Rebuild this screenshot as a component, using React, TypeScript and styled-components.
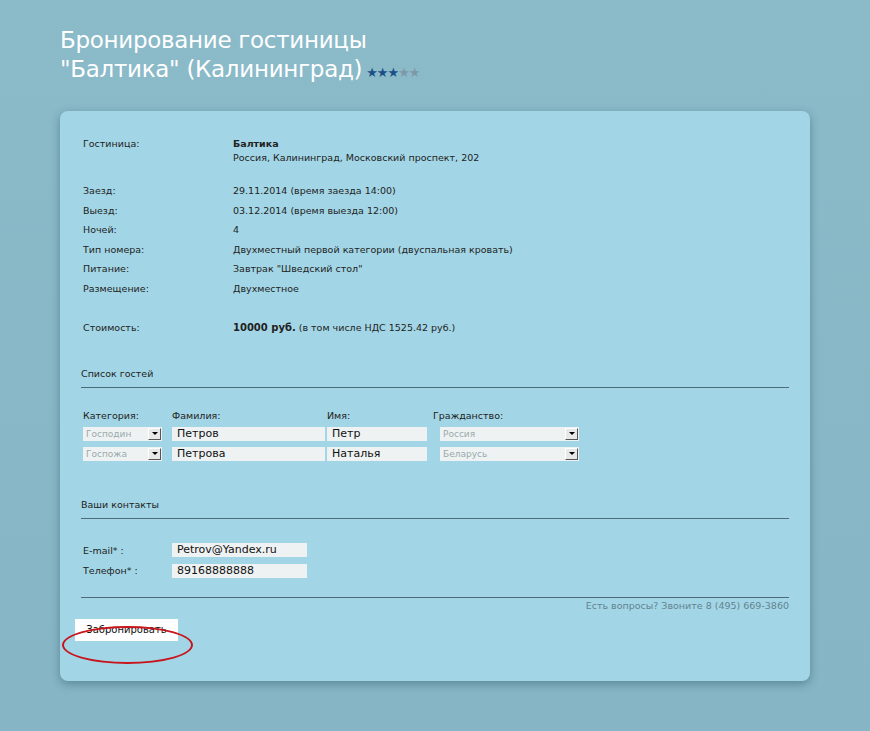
import React from "react";
import styled, { createGlobalStyle } from "styled-components";

const G = createGlobalStyle`
  html,body{margin:0;padding:0;background:#8ab9c9;}
  body{font-family:"DejaVu Sans",Tahoma,sans-serif;}
`;
const Page = styled.div`
  width:870px;height:731px;box-sizing:border-box;background:linear-gradient(#8bbac9,#86b5c5);
  padding:26px 0 0 60px;
`;
const Title = styled.h1`
  margin:0;font-family:"DejaVu Sans",sans-serif;font-weight:normal;color:#fff;font-size:23px;line-height:29px;letter-spacing:-0.3px;
`;
const Stars = styled.span`font-size:13px;letter-spacing:-1px;margin-left:4px;`;
const Star = styled.span<{ $on: boolean }>`color:${p => (p.$on ? "#1d4f86" : "#7d98a6")};`;
const Card = styled.div`
  position:relative;margin-top:24px;width:750px;height:570px;box-sizing:border-box;background:#a2d6e6;border-radius:8px;
  box-shadow:0 3px 10px rgba(40,80,95,.45);padding:23px 21px 0 21px;font-size:9.5px;color:#222;
`;
const Info = styled.div`
  display:grid;grid-template-columns:150px 1fr;padding-left:2px;row-gap:0;
`;
const L = styled.div<{ $mt?: number }>`margin-top:${p => p.$mt ?? 0}px;line-height:19.5px;`;
const V = styled.div<{ $mt?: number }>`margin-top:${p => p.$mt ?? 0}px;line-height:19.5px;`;
const Section = styled.div<{ $mt: number }>`
  margin-top:${p => p.$mt}px;padding-bottom:8px;border-bottom:1.5px solid #4d6c79;font-size:9.5px;
`;
const Guests = styled.div`
  margin-top:22px;padding-left:2px;display:grid;grid-template-columns:89px 155px 102px 140px;row-gap:6px;align-items:center;
`;
const H = styled.div`font-size:9.5px;color:#222;`;
const Sel = styled.div<{ $w: number; $ml?: number }>`
  width:${p => p.$w}px;margin-left:${p => p.$ml ?? 0}px;height:14px;box-sizing:border-box;background:#eef2f3;color:#9aa;display:flex;align-items:center;justify-content:space-between;padding-left:3px;font-size:9px;
`;
const Arrow = styled.span`
  width:13px;height:12px;margin-right:1px;background:#e8e8e8;border:1px solid #777;border-color:#fff #555 #555 #fff;box-sizing:border-box;display:flex;align-items:center;justify-content:center;
  &::after{content:"";border:3px solid transparent;border-top:3px solid #000;margin-top:3px;}
`;
const Inp = styled.div<{ $w: number }>`
  width:${p => p.$w}px;height:14px;background:#eef2f3;color:#111;font-size:11px;line-height:14px;padding-left:5px;box-sizing:border-box;
`;
const Contacts = styled.div`
  margin-top:22px;padding-left:2px;display:grid;grid-template-columns:89px auto;row-gap:1px;align-items:center;justify-content:start;
`;
const Footer = styled.div`
  margin-top:16px;border-top:1.5px solid #4d6c79;text-align:right;padding-top:2px;color:#64838f;font-size:9.5px;
`;
const Btn = styled.div`
  margin:8px 0 0 -6px;width:103px;height:22px;background:#fff;display:flex;align-items:center;justify-content:center;font-size:10px;color:#111;
`;
const Ellipse = styled.div`
  position:absolute;left:2px;top:515px;width:131px;height:38px;border:2.5px solid #c8141c;border-radius:50%;box-sizing:border-box;
`;

export default function App() {
  return (
    <Page>
      <G />
      <Title>Бронирование гостиницы<br />"Балтика" (Калининград)<Stars>{[1,2,3,4,5].map(i => <Star key={i} $on={i <= 3}>★</Star>)}</Stars></Title>
      <Card>
        <Info>
          <L>Гостиница:</L>
          <V><b>Балтика</b><br /><span style={{ position: "relative", top: -6 }}>Россия, Калининград, Московский проспект, 202</span></V>
          <L $mt={8}>Заезд:</L><V $mt={8}>29.11.2014 (время заезда 14:00)</V>
          <L>Выезд:</L><V>03.12.2014 (время выезда 12:00)</V>
          <L>Ночей:</L><V>4</V>
          <L>Тип номера:</L><V>Двухместный первой категории (двуспальная кровать)</V>
          <L>Питание:</L><V>Завтрак "Шведский стол"</V>
          <L>Размещение:</L><V>Двухместное</V>
          <L $mt={20}>Стоимость:</L><V $mt={20}><b style={{ fontSize: 10 }}>10000 руб.</b> (в том числе НДС 1525.42 руб.)</V>
        </Info>
        <Section $mt={30}>Список гостей</Section>
        <Guests>
          <H>Категория:</H><H>Фамилия:</H><H>Имя:</H><H style={{ marginLeft: 4 }}>Гражданство:</H>
          <Sel $w={79}>Господин<Arrow /></Sel><Inp $w={153}>Петров</Inp><Inp $w={100}>Петр</Inp><Sel $w={139} $ml={11}>Россия<Arrow /></Sel>
          <Sel $w={79}>Госпожа<Arrow /></Sel><Inp $w={153}>Петрова</Inp><Inp $w={100}>Наталья</Inp><Sel $w={139} $ml={11}>Беларусь<Arrow /></Sel>
        </Guests>
        <Section $mt={38}>Ваши контакты</Section>
        <Contacts>
          <L>E-mail* :</L><Inp $w={135}>Petrov@Yandex.ru</Inp>
          <L>Телефон* :</L><Inp $w={135}>89168888888</Inp>
        </Contacts>
        <Footer>Есть вопросы? Звоните 8 (495) 669-3860</Footer>
        <Btn>Забронировать</Btn>
        <Ellipse />
      </Card>
    </Page>
  );
}
